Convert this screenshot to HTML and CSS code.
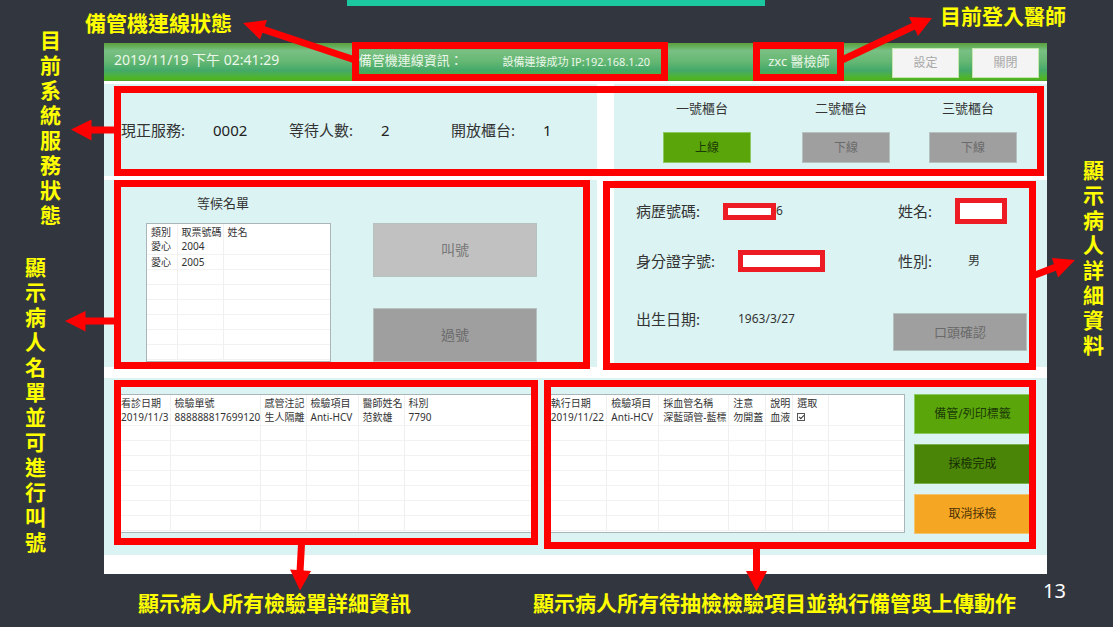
FILE: index.html
```html
<!DOCTYPE html>
<html lang="zh-Hant">
<head>
<meta charset="utf-8">
<meta name="viewport" content="width=device-width, initial-scale=1">
<title>採檢系統</title>
<link rel="stylesheet" href="styles.css">
</head>
<body>
<div class="slide">
  <div class="accent"></div>

  <main class="app">
    <header class="topbar">
      <time class="clock">2019/11/19 下午 02:41:29</time>
      <span class="conn-label">備管機連線資訊：</span>
      <span class="conn-status">設備連接成功 IP:192.168.1.20</span>
      <span class="user">zxc 醫檢師</span>
      <div class="topbar-actions">
        <button class="btn btn-plain" type="button">設定</button>
        <button class="btn btn-plain" type="button">關閉</button>
      </div>
    </header>

    <div class="split">
      <section class="panel service">
        <dl class="stats">
          <dt>現正服務:</dt><dd>0002</dd>
          <dt>等待人數:</dt><dd>2</dd>
          <dt>開放櫃台:</dt><dd>1</dd>
        </dl>
      </section>
      <section class="panel counters">
        <div class="counter"><h2 class="counter-name">一號櫃台</h2><button class="btn btn-green" type="button">上線</button></div>
        <div class="counter"><h2 class="counter-name">二號櫃台</h2><button class="btn btn-gray" type="button">下線</button></div>
        <div class="counter"><h2 class="counter-name">三號櫃台</h2><button class="btn btn-gray" type="button">下線</button></div>
      </section>
    </div>

    <div class="split">
      <section class="panel waiting">
        <div class="waiting-list">
          <h2 class="list-title">等候名單</h2>
          <div class="sheet sheet-waiting">
            <table class="grid">
              <colgroup><col class="w30"><col class="w46"><col></colgroup>
              <thead><tr><th>類別</th><th>取票號碼</th><th>姓名</th></tr></thead>
              <tbody>
                <tr><td>愛心</td><td>2004</td><td></td></tr>
                <tr><td>愛心</td><td>2005</td><td></td></tr>
                <tr><td></td><td></td><td></td></tr>
                <tr><td></td><td></td><td></td></tr>
                <tr><td></td><td></td><td></td></tr>
                <tr><td></td><td></td><td></td></tr>
                <tr><td></td><td></td><td></td></tr>
                <tr><td></td><td></td><td></td></tr>
              </tbody>
            </table>
          </div>
        </div>
        <div class="call-actions">
          <button class="btn btn-silver btn-call" type="button">叫號</button>
          <button class="btn btn-gray btn-call" type="button">過號</button>
        </div>
      </section>
      <section class="panel patient">
        <div class="field"><span class="field-label">病歷號碼:</span><span class="field-value"><span class="mask mask-record"></span>6</span></div>
        <div class="field"><span class="field-label">姓名:</span><span class="field-value"><span class="mask mask-name"></span></span></div>
        <div class="field"><span class="field-label">身分證字號:</span><span class="field-value"><span class="mask mask-id"></span></span></div>
        <div class="field"><span class="field-label">性別:</span><span class="field-value field-sex">男</span></div>
        <div class="field"><span class="field-label field-birth">出生日期:</span><span class="field-value">1963/3/27</span></div>
        <button class="btn btn-gray btn-confirm" type="button">口頭確認</button>
      </section>
    </div>

    <section class="panel orders">
      <div class="sheet sheet-orders">
        <table class="grid">
          <colgroup><col class="w53"><col class="w90"><col class="w46"><col class="w52"><col class="w46"><col></colgroup>
          <thead><tr><th>看診日期</th><th>檢驗單號</th><th>感管注記</th><th>檢驗項目</th><th>醫師姓名</th><th>科別</th></tr></thead>
          <tbody>
            <tr><td>2019/11/3</td><td>888888817699120</td><td>生人隔離</td><td>Anti-HCV</td><td>范欽雄</td><td>7790</td></tr>
            <tr><td></td><td></td><td></td><td></td><td></td><td></td></tr>
            <tr><td></td><td></td><td></td><td></td><td></td><td></td></tr>
            <tr><td></td><td></td><td></td><td></td><td></td><td></td></tr>
            <tr><td></td><td></td><td></td><td></td><td></td><td></td></tr>
            <tr><td></td><td></td><td></td><td></td><td></td><td></td></tr>
            <tr><td></td><td></td><td></td><td></td><td></td><td></td></tr>
            <tr><td></td><td></td><td></td><td></td><td></td><td></td></tr>
          </tbody>
        </table>
      </div>
      <div class="sheet sheet-tubes">
        <table class="grid">
          <colgroup><col class="w60"><col class="w52"><col class="w70"><col class="w37"><col class="w27"><col class="w36"><col></colgroup>
          <thead><tr><th>執行日期</th><th>檢驗項目</th><th>採血管名稱</th><th>注意</th><th>說明</th><th>選取</th><td></td></tr></thead>
          <tbody>
            <tr><td>2019/11/22</td><td>Anti-HCV</td><td>深藍頭管-藍標</td><td>勿開蓋</td><td>血液</td><td><input class="tick" type="checkbox" aria-label="選取" checked></td><td></td></tr>
            <tr><td></td><td></td><td></td><td></td><td></td><td></td><td></td></tr>
            <tr><td></td><td></td><td></td><td></td><td></td><td></td><td></td></tr>
            <tr><td></td><td></td><td></td><td></td><td></td><td></td><td></td></tr>
            <tr><td></td><td></td><td></td><td></td><td></td><td></td><td></td></tr>
            <tr><td></td><td></td><td></td><td></td><td></td><td></td><td></td></tr>
            <tr><td></td><td></td><td></td><td></td><td></td><td></td><td></td></tr>
            <tr><td></td><td></td><td></td><td></td><td></td><td></td><td></td></tr>
          </tbody>
        </table>
      </div>
      <div class="order-actions">
        <button class="btn btn-green" type="button">備管/列印標籤</button>
        <button class="btn btn-dark" type="button">採檢完成</button>
        <button class="btn btn-orange" type="button">取消採檢</button>
      </div>
    </section>
  </main>

  <svg class="marks" viewBox="0 0 1113 627" preserveAspectRatio="none" aria-hidden="true">
    <g fill="none" stroke="#ff0000" stroke-width="7">
      <rect x="355.500" y="45.500" width="309" height="32"/>
      <rect x="756.500" y="45.500" width="84" height="32"/>
      <rect x="117.500" y="89.500" width="923" height="83"/>
      <rect x="117.500" y="183.500" width="469" height="182"/>
      <rect x="606.500" y="184.500" width="426" height="182"/>
      <rect x="117.500" y="383.500" width="417" height="158"/>
      <rect x="547.500" y="383.500" width="485" height="162"/>
      <path d="M355 60L262 29M842 60L914 26M116 130H90M116 321H84M1035 275L1056 267M301.500 544L300 572M756.500 548V573"/>
    </g>
    <g fill="#ff0000">
      <path d="M243 23L267 20L260 39.500Z"/>
      <path d="M932 18L909 17L918 36Z"/>
      <path d="M71 129.500L91.500 119.500V140.500Z"/>
      <path d="M65 321L85.500 311V331.500Z"/>
      <path d="M1075 260L1052 258L1058 277.500Z"/>
      <path d="M300 590.500L290 569.500L311 571Z"/>
      <path d="M756.500 591.500L746 571H767Z"/>
    </g>
  </svg>

  <p class="note note-conn">備管機連線狀態</p>
  <p class="note note-user">目前登入醫師</p>
  <p class="note note-tall note-service">目前系統服務狀態</p>
  <p class="note note-tall note-queue">顯示病人名單並可進行叫號</p>
  <p class="note note-tall note-patient">顯示病人詳細資料</p>
  <p class="note note-orders">顯示病人所有檢驗單詳細資訊</p>
  <p class="note note-tubes">顯示病人所有待抽檢檢驗項目並執行備管與上傳動作</p>
  <span class="page-number">13</span>
</div>
</body>
</html>
```
FILE: styles.css
```css
* {
  box-sizing: border-box;
}

body,
h2,
p,
dl,
dd {
  margin: 0;
}

body {
  background: #32363f;
  color: #333;
  font-family: "Noto Sans", "Noto Sans CJK TC", sans-serif;
  font-size: 13px;
  line-height: 20px;
}

h2 {
  font-size: 13px;
  font-weight: 400;
}

.slide {
  position: relative;
  min-height: 100vh;
  padding: 0 66px 53px 104px;
}

.accent {
  width: 418px;
  height: 6px;
  margin: 0 0 37px 243px;
  background: #1cc8a0;
}

/* application window */
.app {
  padding-bottom: 19px;
  background: #fff;
}

.topbar {
  display: grid;
  grid-template-columns: 245fr 144fr 266fr 124fr auto;
  align-items: center;
  height: 38px;
  margin-bottom: 3px;
  padding: 0 8px 0 10px;
  background: linear-gradient(#5c9f3f 0, #62ad55 8%, #79c083 20%, #66b873 48%, #44a96a 72%, #4cb13c 86%, #51b61f 95%, #4c9f35 100%);
  color: #eaf7ea;
  white-space: nowrap;
}

.clock {
  padding-bottom: 4px;
  font-size: 14px;
}

.conn-label {
  padding-bottom: 4px;
}

.conn-status {
  font-size: 11px;
}

.user {
  padding-bottom: 3px;
}

.topbar-actions {
  display: flex;
  gap: 13px;
  padding-top: 2px;
}

.split {
  display: grid;
  grid-template-columns: 493fr 433fr;
  gap: 17px;
  margin-bottom: 4px;
}

.split + .split {
  margin-bottom: 11px;
}

.panel {
  background: #dbf3f3;
}

/* buttons */
.btn {
  height: 31px;
  padding: 0;
  border: 1px solid #b5c2c0;
  font: inherit;
  font-size: 12px;
  white-space: nowrap;
}

.btn-plain {
  width: 67px;
  height: 30px;
  border-color: #c5e8ae;
  background: #f4f4f4;
  color: #a8a8a8;
}

.btn-green {
  border-color: #8bca62;
  background: #5aa60a;
  color: #1c3a05;
}

.btn-dark {
  border-color: #7bb04e;
  background: #4a8508;
  color: #142a02;
}

.btn-orange {
  border-color: #f3c46f;
  background: #f5a623;
  color: #4a3005;
}

.btn-gray {
  background: #9f9f9f;
  color: #6a6a6a;
}

.btn-silver {
  background: #c1c1c1;
  color: #777;
}

/* service status */
.service {
  display: flex;
  align-items: center;
  padding-left: 17px;
}

.stats {
  display: grid;
  flex: 1;
  grid-template-columns: 92fr 76fr 92fr 70fr 92fr 54fr;
  font-size: 15px;
}

.stats dd {
  color: #222;
}

.counters {
  display: flex;
  justify-content: space-between;
  padding: 14px 30px 13px 49px;
}

.counter {
  display: flex;
  flex-direction: column;
  gap: 14px;
  width: 88px;
}

.counter:first-child {
  margin-right: 12px;
}

.counter-name {
  padding-left: 13px;
}

/* waiting list */
.waiting {
  display: flex;
  gap: 42px;
  padding: 13px 60px 5px 42px;
}

.waiting-list {
  flex: 1;
}

.list-title {
  padding-left: 51px;
  margin-bottom: 10px;
}

.call-actions {
  display: flex;
  flex-direction: column;
  justify-content: space-between;
  width: 164px;
  padding-top: 30px;
}

.btn-call {
  height: 54px;
  font-size: 14px;
}

.sheet {
  height: 139px;
  overflow: hidden;
  border: 1px solid #a9b5b8;
  background: #fff;
}

.grid {
  width: 100%;
  border-collapse: collapse;
  table-layout: fixed;
  font-size: 10px;
  line-height: 14px;
}

.grid th,
.grid td {
  height: 15px;
  padding: 0 0 0 4px;
  border-right: 1px solid #f0f0f0;
  font-weight: 400;
  text-align: left;
  white-space: nowrap;
}

.grid td {
  border-bottom: 1px solid #f2f2f2;
}

.grid thead td {
  border-bottom: 0;
}

.grid th:last-child,
.grid td:last-child {
  border-right: 0;
}

.w27 { width: 27px; }
.w30 { width: 30px; }
.w36 { width: 36px; }
.w37 { width: 37px; }
.w46 { width: 46px; }
.w52 { width: 52px; }
.w53 { width: 53px; }
.w60 { width: 60px; }
.w70 { width: 70px; }
.w90 { width: 90px; }

.tick {
  display: block;
  position: relative;
  width: 8px;
  height: 8px;
  margin: 0;
  border: 1px solid #555;
  background: #fff;
  appearance: none;
}

.tick:checked::after {
  content: "";
  position: absolute;
  top: 0;
  left: 2px;
  width: 2px;
  height: 4px;
  border: solid #333;
  border-width: 0 1px 1px 0;
  transform: rotate(45deg);
}

/* patient details */
.patient {
  display: grid;
  grid-template-columns: 1fr 134px;
  grid-template-rows: 50px 50px 65px;
  padding: 6px 20px 16px 22px;
}

.field {
  display: flex;
  align-items: center;
  gap: 23px;
}

.field:nth-child(even) {
  padding-left: 5px;
}

.field-label {
  font-size: 15px;
}

.field-birth {
  min-width: 79px;
}

.field-value {
  display: flex;
  align-items: center;
  font-size: 12px;
}

.field-sex {
  padding-left: 13px;
}

.mask {
  border: 5px solid #ed1c24;
  background: #fff;
}

.mask-record {
  width: 53px;
  height: 17px;
}

.mask-name {
  width: 52px;
  height: 26px;
}

.mask-id {
  width: 87px;
  height: 22px;
}

.btn-confirm {
  align-self: end;
  height: 38px;
  font-size: 13px;
}

/* orders and tubes */
.orders {
  display: flex;
  padding: 16px 16px 21px 12px;
}

.sheet-orders {
  flex: 419;
  margin-right: 11px;
}

.sheet-tubes {
  flex: 359;
  margin-right: 9px;
}

.order-actions {
  display: flex;
  flex-direction: column;
  gap: 10px;
  width: 117px;
}

.order-actions .btn {
  height: 40px;
}

/* callouts laid over the window */
.marks {
  position: absolute;
  inset: 0;
  width: 100%;
  height: 100%;
  pointer-events: none;
}

.note {
  position: absolute;
  color: #ff0;
  font-size: 21px;
  font-weight: 700;
  line-height: 25px;
  white-space: nowrap;
}

.note-tall {
  width: 21px;
  white-space: normal;
  word-break: break-all;
}

.note-conn { top: 11px; left: 85px; }
.note-user { top: 4px; right: 47px; }
.note-service { top: 28px; left: 40px; }
.note-queue { top: 255px; left: 25px; }
.note-patient { top: 158px; right: 9px; }
.note-orders { top: 591px; left: 138px; }
.note-tubes { top: 591px; right: 97px; }

.page-number {
  position: absolute;
  top: 581px;
  right: 47px;
  color: #fff;
  font-size: 20px;
}
```
